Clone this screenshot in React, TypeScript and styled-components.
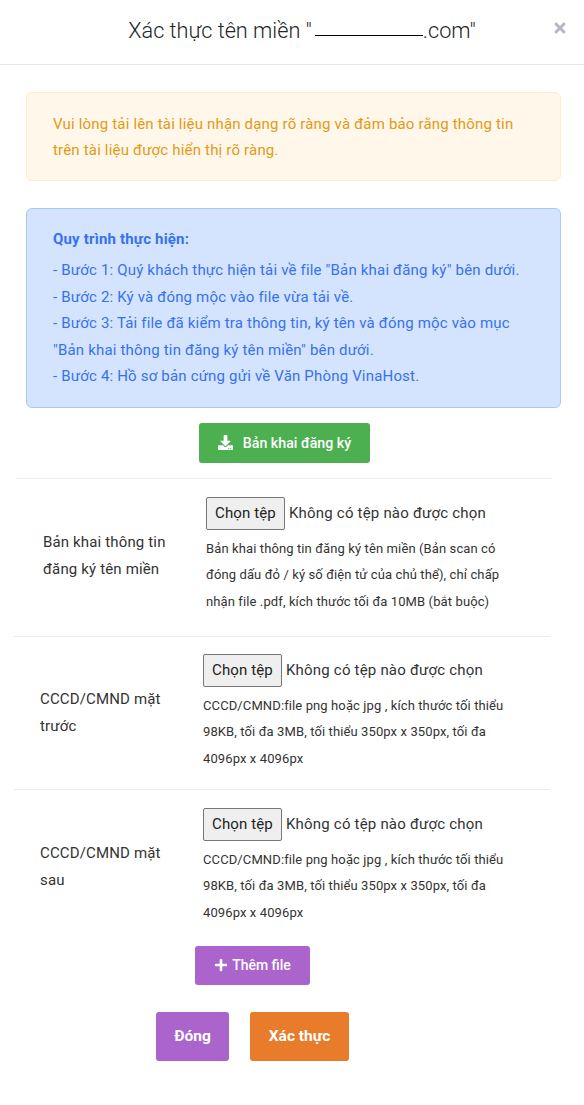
import * as React from "react";
import { FaDownload, FaPlus, FaTimes } from "react-icons/fa";
import styled, { createGlobalStyle } from "styled-components";

const GlobalStyle = createGlobalStyle`
	html, body {
		margin: 0;
		padding: 0;
		background: #fff;
	}
	body {
		font-family: Roboto, "Liberation Sans", sans-serif;
		font-size: 15px;
		color: #333;
	}
	* {
		box-sizing: border-box;
	}
`;

const Modal = styled.div`
	width: 584px;
	height: 1105px;
	background: #fff;
	overflow: hidden;
`;

const Header = styled.header`
	position: relative;
	height: 65px;
	border-bottom: 1px solid #e4e6ea;
	display: flex;
	align-items: center;
	justify-content: center;
	padding-left: 20px;
	padding-bottom: 3px;
`;

const Title = styled.h1`
	margin: 0;
	font-size: 21.7px;
	font-weight: 300;
	color: #212529;
	white-space: nowrap;
`;

const Redacted = styled.span`
	display: inline-block;
	width: 108px;
	height: 1px;
	background: #000;
	vertical-align: 2px;
	margin-left: 3px;
`;

const Close = styled.button`
	position: absolute;
	top: 20px;
	right: 16px;
	padding: 0;
	border: 0;
	background: none;
	color: #b5b5c3;
	font-size: 16px;
	line-height: 1;
`;

const Body = styled.div`
	padding: 27px 23px 0 26px;
`;

const Alert = styled.div<{ $tone: "warning" | "info" }>`
	border: 1px solid ${(p) => (p.$tone === "warning" ? "#ffedc9" : "#a9c7fb")};
	background: ${(p) => (p.$tone === "warning" ? "#fff7ea" : "#d4e3fe")};
	color: ${(p) => (p.$tone === "warning" ? "#e29a16" : "#3672f0")};
	border-radius: 6px;
	padding: ${(p) => (p.$tone === "warning" ? "18px 26px 17px" : "17px 26px 17px")};
	font-size: 15px;
	line-height: 26px;
	margin-bottom: ${(p) => (p.$tone === "warning" ? "27px" : "15px")};
	letter-spacing: 0.18px;
`;

const AlertTitle = styled.div`
	font-weight: 700;
	margin-bottom: 5px;
`;

const Step = styled.div`
	line-height: 26.5px;
`;

const Center = styled.div`
	display: flex;
	justify-content: center;
	padding-right: 18px;
`;

const DownloadButton = styled.button`
	height: 40px;
	width: 171px;
	border: 0;
	border-radius: 3px;
	background: #4caf50;
	color: #fff;
	font-family: inherit;
	font-size: 14.2px;
	font-weight: 500;
	display: flex;
	align-items: center;
	justify-content: center;
	gap: 10px;
`;

const Rows = styled.div`
	margin-top: 15px;
`;

const Row = styled.div<{ $shift: number; $height: number; $inset: number; $top: number }>`
	display: grid;
	grid-template-columns: 163px 1fr;
	width: 536px;
	height: ${(p) => p.$height}px;
	margin-left: ${(p) => p.$shift}px;
	border-top: 1px solid #ececec;
	padding: ${(p) => p.$top}px 20px 0 ${(p) => p.$inset}px;
`;

const RowLabel = styled.div`
	font-size: 15px;
	line-height: 27px;
	color: #333;
	padding-top: 32px;
	padding-right: 24px;
	letter-spacing: 0.15px;
`;

const FileLine = styled.div`
	display: flex;
	align-items: center;
	font-size: 15px;
	color: #333;
	letter-spacing: 0.2px;
`;

const FileButton = styled.button`
	width: 79px;
	height: 33px;
	padding: 0;
	margin-right: 4px;
	background: #efefef;
	border: 1px solid #767676;
	border-radius: 2px;
	font-family: inherit;
	font-size: 15px;
	color: #222;
	letter-spacing: 0.12px;
`;

const Hint = styled.div`
	font-size: 13px;
	line-height: 26.5px;
	color: #333;
	margin-top: 6px;
	letter-spacing: 0.11px;
	white-space: pre-line;
`;

const AddRow = styled.div`
	display: flex;
	justify-content: flex-start;
	padding-left: 169px;
`;

const PurpleButton = styled.button`
	width: 115px;
	height: 39px;
	border: 0;
	border-radius: 3px;
	background: #aa64cc;
	color: #fff;
	font-family: inherit;
	font-size: 14px;
	font-weight: 500;
	padding-top: 1px;
	display: flex;
	align-items: center;
	justify-content: center;
	gap: 4px;
`;

const Actions = styled.div`
	display: flex;
	gap: 21px;
	padding-left: 130px;
	margin-top: 27px;
`;

const ActionButton = styled.button<{ $color: string; $width: number }>`
	width: ${(p) => p.$width}px;
	height: 49px;
	border: 0;
	border-radius: 3px;
	background: ${(p) => p.$color};
	color: #fff;
	font-family: inherit;
	font-size: 15.5px;
	font-weight: 700;
`;

const uploads = [
	{
		label: "Bản khai thông tin đăng ký tên miền",
		hint: "Bản khai thông tin đăng ký tên miền (Bản scan có\nđóng dấu đỏ / ký số điện tử của chủ thể), chỉ chấp\nnhận file .pdf, kích thước tối đa 10MB (bắt buộc)",
		shift: -10,
		height: 158,
		inset: 27,
		top: 18,
	},
	{
		label: "CCCD/CMND mặt trước",
		hint: "CCCD/CMND:file png hoặc jpg , kích thước tối thiểu\n98KB, tối đa 3MB, tối thiểu 350px x 350px, tối đa\n4096px x 4096px",
		shift: -12,
		height: 153,
		inset: 26,
		top: 17,
	},
	{
		label: "CCCD/CMND mặt sau",
		hint: "CCCD/CMND:file png hoặc jpg , kích thước tối thiểu\n98KB, tối đa 3MB, tối thiểu 350px x 350px, tối đa\n4096px x 4096px",
		shift: -12,
		height: 157,
		inset: 26,
		top: 18,
	},
];

export default function App(): JSX.Element {
	return (
		<Modal>
			<GlobalStyle />
			<Header>
				<Title>
					Xác thực tên miền "<Redacted />.com"
				</Title>
				<Close aria-label="Đóng">
					<FaTimes />
				</Close>
			</Header>
			<Body>
				<Alert $tone="warning">
					Vui lòng tải lên tài liệu nhận dạng rõ ràng và đảm bảo rằng thông tin trên tài liệu được hiển thị rõ ràng.
				</Alert>
				<Alert $tone="info">
					<AlertTitle>Quy trình thực hiện:</AlertTitle>
					<Step>- Bước 1: Quý khách thực hiện tải về file "Bản khai đăng ký" bên dưới.</Step>
					<Step>- Bước 2: Ký và đóng mộc vào file vừa tải về.</Step>
					<Step>
						- Bước 3: Tải file đã kiểm tra thông tin, ký tên và đóng mộc vào mục "Bản khai thông tin đăng ký tên miền" bên dưới.
					</Step>
					<Step>- Bước 4: Hồ sơ bản cứng gửi về Văn Phòng VinaHost.</Step>
				</Alert>
				<Center>
					<DownloadButton>
						<FaDownload size={15} />
						Bản khai đăng ký
					</DownloadButton>
				</Center>
				<Rows>
					{uploads.map((u) => (
						<Row key={u.label} $shift={u.shift} $height={u.height} $inset={u.inset} $top={u.top}>
							<RowLabel>{u.label}</RowLabel>
							<div>
								<FileLine>
									<FileButton>Chọn tệp</FileButton>
									Không có tệp nào được chọn
								</FileLine>
								<Hint>{u.hint}</Hint>
							</div>
						</Row>
					))}
				</Rows>
				<AddRow>
					<PurpleButton>
						<FaPlus size={14} />
						Thêm file
					</PurpleButton>
				</AddRow>
				<Actions>
					<ActionButton $color="#aa64cc" $width={73}>
						Đóng
					</ActionButton>
					<ActionButton $color="#e87c2b" $width={99}>
						Xác thực
					</ActionButton>
				</Actions>
			</Body>
		</Modal>
	);
}
